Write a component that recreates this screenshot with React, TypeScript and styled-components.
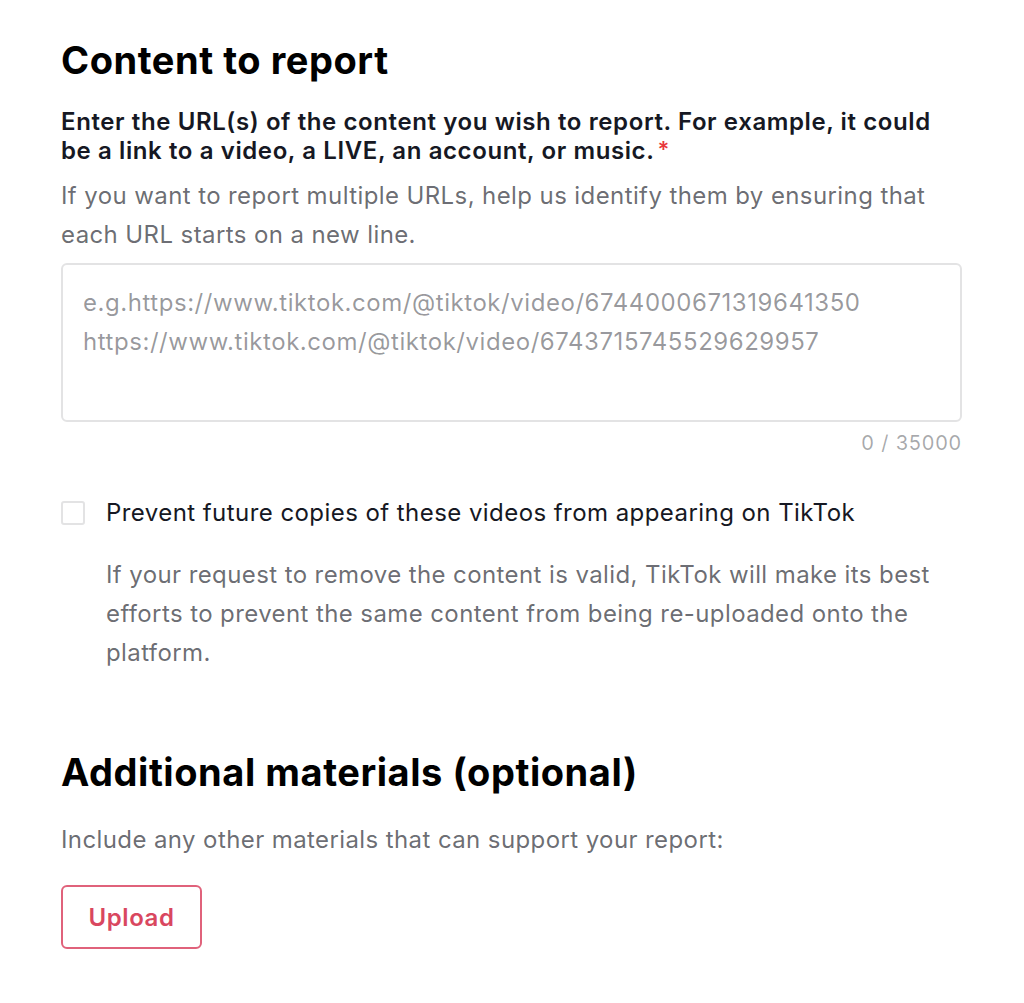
import styled, { createGlobalStyle } from 'styled-components';

const GlobalStyle = createGlobalStyle`
  html, body {
    margin: 0;
    padding: 0;
    background: #fff;
  }
  body {
    font-family: Inter, "Noto Sans", "Liberation Sans", sans-serif;
    color: #161823;
    -webkit-font-smoothing: antialiased;
  }
`;

const Page = styled.div`
  width: 901px;
  padding: 36px 0 40px 61px;
`;

const Section = styled.section<{ $gap?: number }>`
  margin-bottom: ${(p) => p.$gap ?? 0}px;
`;

const Heading = styled.h2`
  margin: 0;
  font-size: 38px;
  font-weight: 700;
  line-height: 48px;
  letter-spacing: 0.55px;
  color: #000;
`;

const Label = styled.div`
  margin-top: 23px;
  font-size: 24px;
  font-weight: 600;
  line-height: 29px;
  letter-spacing: 0.6px;
  color: #161823;
`;

const Required = styled.span`
  margin-left: 3px;
  font-size: 22px;
  line-height: 1;
  vertical-align: 2px;
  color: #e8383d;
`;

const Hint = styled.p<{ $top?: number }>`
  margin: ${(p) => p.$top ?? 0}px 0 0;
  font-size: 24px;
  line-height: 39px;
  letter-spacing: 0.4px;
  color: rgba(22, 24, 35, 0.65);
`;

const TextArea = styled.textarea`
  display: block;
  box-sizing: border-box;
  width: 100%;
  height: 159px;
  margin-top: 9px;
  padding: 18px 20px;
  border: 2px solid #e3e3e4;
  border-radius: 6px;
  resize: none;
  outline: none;
  font-family: inherit;
  font-size: 24px;
  line-height: 39px;
  letter-spacing: 0.55px;
  color: #161823;

  &::placeholder {
    color: rgba(22, 24, 35, 0.45);
  }
`;

const Counter = styled.div`
  margin-top: 7px;
  text-align: right;
  font-size: 20px;
  line-height: 28px;
  letter-spacing: 0.8px;
  color: rgba(22, 24, 35, 0.38);
`;

const CheckRow = styled.label`
  display: flex;
  align-items: center;
  gap: 21px;
  margin-top: 36px;
  font-size: 24px;
  line-height: 39px;
  letter-spacing: 0.44px;
  color: #161823;
  cursor: pointer;
`;

const Box = styled.input.attrs({ type: 'checkbox' })`
  appearance: none;
  box-sizing: border-box;
  width: 24px;
  height: 24px;
  margin: 0;
  border: 2px solid #e3e3e4;
  border-radius: 3px;
  background: #fff;
  flex-shrink: 0;
`;

const Indented = styled.div`
  padding-left: 45px;
  margin-top: 23px;
`;

const UploadButton = styled.button`
  margin-top: 26px;
  box-sizing: border-box;
  width: 141px;
  height: 64px;
  border: 2px solid #e0627b;
  border-radius: 6px;
  background: #fff;
  font-family: inherit;
  font-size: 24px;
  font-weight: 600;
  letter-spacing: 0.6px;
  color: #d9475f;
  cursor: pointer;
`;

export default function App() {
  return (
    <>
      <GlobalStyle />
      <Page>
        <Section $gap={76}>
          <Heading>Content to report</Heading>
          <Label>
            Enter the URL(s) of the content you wish to report. For example, it could be a link to a
            video, a LIVE, an account, or music.<Required>*</Required>
          </Label>
          <Hint $top={11}>
            If you want to report multiple URLs, help us identify them by ensuring that each URL
            starts on a new line.
          </Hint>
          <TextArea
            placeholder={
              'e.g.https://www.tiktok.com/@tiktok/video/6744000671319641350\nhttps://www.tiktok.com/@tiktok/video/6743715745529629957'
            }
          />
          <Counter>0 / 35000</Counter>
          <CheckRow>
            <Box />
            Prevent future copies of these videos from appearing on TikTok
          </CheckRow>
          <Indented>
            <Hint>
              If your request to remove the content is valid, TikTok will make its best efforts to
              prevent the same content from being re-uploaded onto the platform.
            </Hint>
          </Indented>
        </Section>
        <Section>
          <Heading>Additional materials (optional)</Heading>
          <Hint $top={24}>Include any other materials that can support your report:</Hint>
          <UploadButton>Upload</UploadButton>
        </Section>
      </Page>
    </>
  );
}
